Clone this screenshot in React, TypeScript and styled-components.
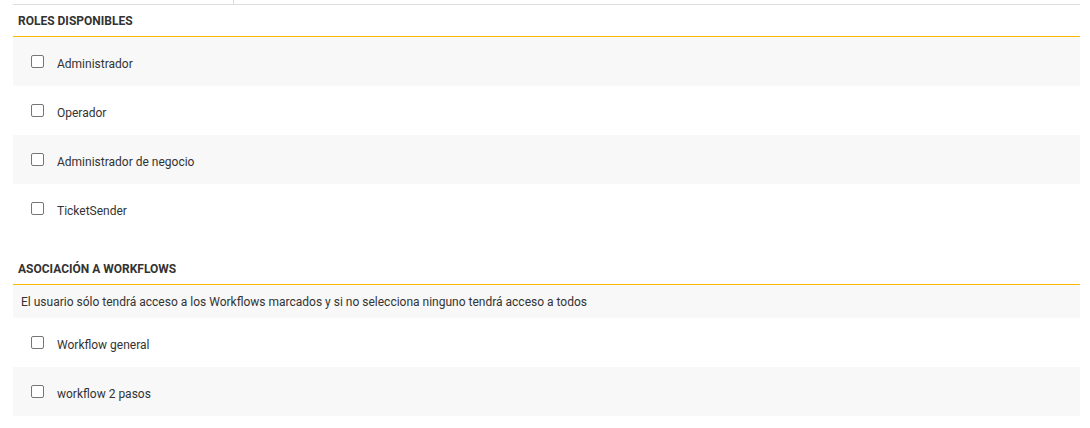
import React from "react";
import styled, { createGlobalStyle } from "styled-components";

const Global = createGlobalStyle`
  html, body { margin: 0; padding: 0; background: #fff; }
  body { font-family: Roboto, "Liberation Sans", Arial, sans-serif; color: #333; }
`;

const Page = styled.div`
  padding: 0 10px 0 13px;
  display: flex;
  flex-direction: column;
`;

const TopStrip = styled.div`
  display: flex;
  height: 4px;
  border-bottom: 1px solid #ddd;
`;

const TopCell = styled.div<{ $w?: number }>`
  width: ${(p) => (p.$w ? `${p.$w}px` : "auto")};
  flex: ${(p) => (p.$w ? "none" : "1")};
  border-right: ${(p) => (p.$w ? "1px solid #ddd" : "none")};
`;

const Section = styled.section<{ $gap?: number }>`
  display: flex;
  flex-direction: column;
  margin-top: ${(p) => p.$gap ?? 0}px;
`;

const Heading = styled.h3`
  margin: 0;
  height: 31px;
  display: flex;
  align-items: center;
  padding-left: 5px;
  font-size: 12px;
  font-weight: 700;
  color: #333;
  border-bottom: 1px solid #fbb600;
`;

const Info = styled.div`
  height: 33px;
  display: flex;
  align-items: center;
  padding-left: 8px;
  font-size: 12px;
  color: #333;
  background: #f8f8f8;
`;

const Row = styled.label<{ $shade: boolean }>`
  height: 49px;
  display: flex;
  align-items: center;
  gap: 13px;
  padding-left: 18px;
  background: ${(p) => (p.$shade ? "#f8f8f8" : "#fff")};
  font-size: 12px;
  color: #333;
`;

const Box = styled.input`
  appearance: none;
  margin: 0;
  width: 13px;
  height: 13px;
  border: 1px solid #767676;
  border-radius: 2px;
  background: #fff;
  flex: none;
`;

const Label = styled.span`
  position: relative;
  top: 2px;
`;

const roles = ["Administrador", "Operador", "Administrador de negocio", "TicketSender"];
const workflows = ["Workflow general", "workflow 2 pasos"];

export default function App() {
  return (
    <>
      <Global />
      <Page>
        <TopStrip>
          <TopCell $w={220} />
          <TopCell />
        </TopStrip>
        <Section>
          <Heading>ROLES DISPONIBLES</Heading>
          {roles.map((r, i) => (
            <Row key={r} $shade={i % 2 === 0}>
              <Box type="checkbox" />
              <Label>{r}</Label>
            </Row>
          ))}
        </Section>
        <Section $gap={20}>
          <Heading>ASOCIACIÓN A WORKFLOWS</Heading>
          <Info>El usuario sólo tendrá acceso a los Workflows marcados y si no selecciona ninguno tendrá acceso a todos</Info>
          {workflows.map((w, i) => (
            <Row key={w} $shade={i % 2 === 1}>
              <Box type="checkbox" />
              <Label>{w}</Label>
            </Row>
          ))}
        </Section>
      </Page>
    </>
  );
}
